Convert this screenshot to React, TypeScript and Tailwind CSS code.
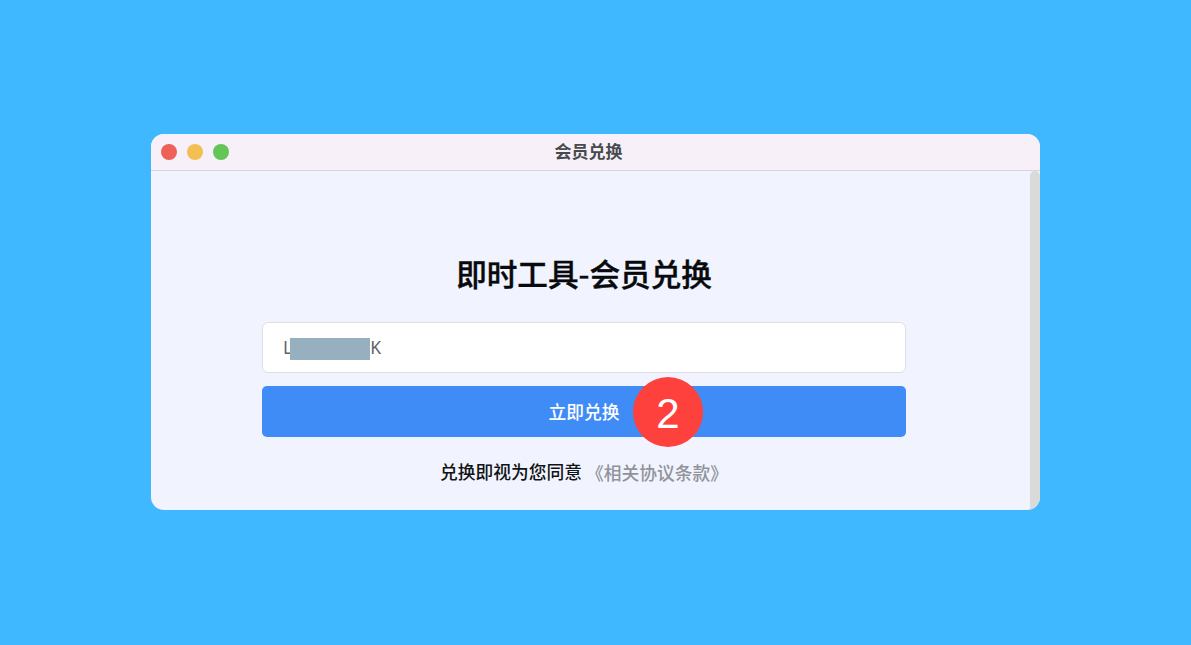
import React, { useState } from 'react';

const TrafficLights: React.FC = () => (
  <div className="flex w-[68px] shrink-0 gap-[10px]">
    <span className="size-4 rounded-full bg-[#ee6158]" />
    <span className="size-4 rounded-full bg-[#f3bf53]" />
    <span className="size-4 rounded-full bg-[#62c555]" />
  </div>
);

const TitleBar: React.FC<{ title: string }> = ({ title }) => (
  <header className="flex h-[37px] shrink-0 items-center border-b border-[#d8d3db] bg-[#f7f0f8] pl-[10px] pr-[92px]">
    <TrafficLights />
    <h2 className="flex-1 pb-[3px] text-center text-[17px] leading-6 font-bold text-[#474a4d]">{title}</h2>
  </header>
);

const StepBadge: React.FC<{ step: number }> = ({ step }) => (
  <span className="absolute -top-[9px] left-[371px] flex size-[70px] items-center justify-center rounded-full bg-[#ff413d] pt-[4px] font-['Liberation_Sans',sans-serif] text-[42px] leading-none font-normal text-white">
    {step}
  </span>
);

const App: React.FC = () => {
  const [agreed] = useState<boolean>(true);

  return (
    <div className="flex h-screen items-center justify-center bg-[#40b8ff] pb-px font-['Noto_Sans_CJK_SC',sans-serif]">
      <div className="flex h-[376px] w-[889px] flex-col overflow-hidden rounded-[13px] bg-[#f1f4fe]">
        <TitleBar title="会员兑换" />

        <div className="flex min-h-0 flex-1">
          <main className="flex-1 pl-[111px] pr-[124px] pt-[80px]">
            <h1 className="text-center text-[30.6px] leading-[44px] font-medium text-[#080a0d] [-webkit-text-stroke:0.4px_#080a0d]">即时工具-会员兑换</h1>

            <div className="mt-[27px] flex h-[51px] items-center rounded-md border border-[#dcdfe6] bg-white pl-5 font-['Noto_Sans',sans-serif] text-[17.5px] text-[#606266]">
              <span>L</span>
              <span className="-ml-[2px] mt-[3px] h-[22px] w-20 bg-[#96b0bf]" />
              <span>K</span>
            </div>

            <div className="relative mt-[13px]">
              <button
                type="button"
                disabled={!agreed}
                className="h-[51px] w-full rounded-[5px] bg-[#3f8cf7] pt-px text-[17.75px] leading-none font-medium text-white"
              >
                立即兑换
              </button>
              <StepBadge step={2} />
            </div>

            <p className="mt-[20px] flex items-center pl-[178px] text-[17.75px] leading-[26px] font-medium whitespace-nowrap text-[#111315]">
              兑换即视为您同意
              <a href="#" className="ml-1 pt-[2px] font-medium text-[#909399]">《相关协议条款》</a>
            </p>
          </main>

          <div className="w-[10px] shrink-0 rounded-t-[5px] bg-[#dadada]" />
        </div>
      </div>
    </div>
  );
};

export default App;
